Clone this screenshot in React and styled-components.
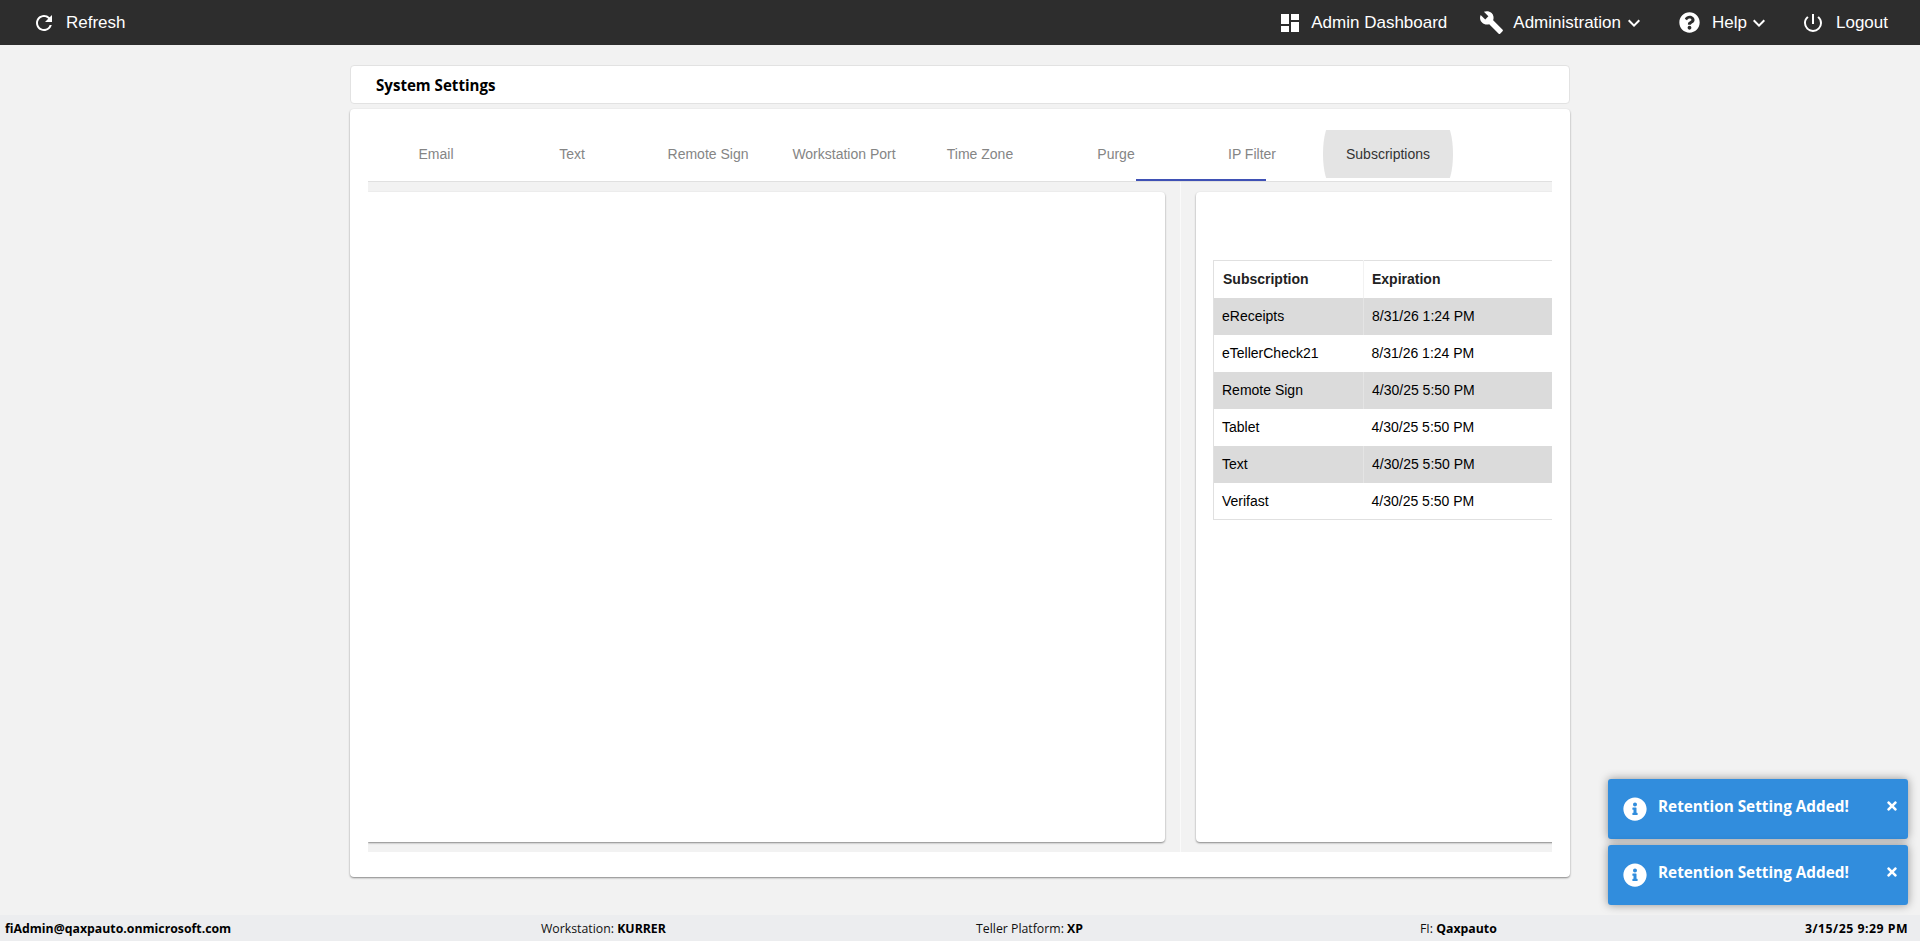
import React from "react";
import styled, { createGlobalStyle } from "styled-components";
import { FaInfoCircle, FaTimes, FaQuestionCircle } from "react-icons/fa";
import { MdDashboard, MdRefresh, MdPowerSettingsNew, MdExpandMore, MdBuild } from "react-icons/md";

const Global = createGlobalStyle`
  html, body { margin: 0; padding: 0; height: 100%; background: #f2f2f2; }
  body { font-family: "Liberation Sans", Arial, sans-serif; overflow: hidden; }
  #root { height: 100%; }
`;

const Page = styled.div`
  display: flex;
  flex-direction: column;
  height: 941px;
  position: relative;
`;

const TopBar = styled.header`
  height: 45px;
  flex: none;
  background: #2d2d2d;
  color: #fff;
  display: flex;
  align-items: center;
  justify-content: space-between;
  padding: 0 32px;
  font-size: 17px;
`;

const NavGroup = styled.nav`
  display: flex;
  align-items: center;
`;

const NavItem = styled.div`
  display: flex;
  align-items: center;
  gap: ${(p) => p.$gap}px;
  margin-left: ${(p) => p.$left || 0}px;
  white-space: nowrap;
`;

const Chevron = styled(MdExpandMore)`
  margin-left: ${(p) => p.$offset}px;
`;

const Main = styled.main`
  flex: 1;
  width: 1220px;
  margin-left: 350px;
  padding-top: 20px;
  display: flex;
  flex-direction: column;
  gap: 5px;
`;

const TitleCard = styled.div`
  height: 39px;
  box-sizing: border-box;
  background: #fff;
  border: 1px solid #e2e2e2;
  border-radius: 4px;
  padding: 1px 0 0 25px;
  display: flex;
  align-items: center;
  font-family: "Open Sans", "Noto Sans", sans-serif;
  font-size: 15.1px;
  font-weight: 700;
  color: #000;
`;

const MainCard = styled.section`
  height: 768px;
  box-sizing: border-box;
  background: #fff;
  border-radius: 4px;
  box-shadow: 0 1px 2px rgba(0, 0, 0, 0.45);
  padding: 21px 18px 25px;
  display: flex;
  flex-direction: column;
`;

const TabStrip = styled.div`
  height: 52px;
  box-sizing: border-box;
  flex: none;
  display: flex;
  border-bottom: 1px solid #e0e0e0;
  position: relative;
`;

const InkBar = styled.div`
  position: absolute;
  left: 768px;
  bottom: 0;
  width: 130px;
  height: 2px;
  background: #3f51b5;
`;

const Tab = styled.div`
  width: 130px;
  margin: 0 3px;
  height: 48px;
  display: flex;
  align-items: center;
  justify-content: center;
  font-size: 14px;
  color: ${(p) => (p.$hover ? "#333" : "#858585")};
  position: relative;
  overflow: hidden;
  z-index: 0;
  flex: none;
  ${(p) =>
    p.$hover &&
    `&::before {
      content: "";
      position: absolute;
      z-index: -1;
      left: 0; right: 0; top: -6px; bottom: -6px;
      background: #e4e4e4;
      border-radius: 8px / 30px;
    }`}
`;

const Well = styled.div`
  flex: 1;
  min-height: 0;
  background: #f2f2f2;
  padding: 10px 0;
  display: flex;
  overflow: hidden;
`;

const LeftPanel = styled.div`
  width: 797px;
  flex: none;
  background: #fff;
  border-radius: 0 4px 4px 0;
  box-shadow: 0 1px 2px rgba(0, 0, 0, 0.45);
`;

const Splitter = styled.div`
  width: 31px;
  flex: none;
  position: relative;
  &::after {
    content: "";
    position: absolute;
    left: 15px;
    top: -10px;
    bottom: -10px;
    width: 1px;
    background: #fafafa;
  }
`;

const RightPanel = styled.div`
  width: 420px;
  flex: none;
  box-sizing: border-box;
  background: #fff;
  border-radius: 4px;
  box-shadow: 0 1px 2px rgba(0, 0, 0, 0.45);
  padding: 68px 0 0 17px;
`;

const Table = styled.table`
  border-collapse: collapse;
  width: 400px;
  table-layout: fixed;
  border-top: 1px solid #e0e0e0;
  border-bottom: 1px solid #e0e0e0;
  border-left: 1px solid #e0e0e0;
  font-size: 14px;
  color: #000;
`;

const FirstColumn = styled.col`
  width: 150px;
`;

const HeadCell = styled.th`
  height: 37px;
  padding: 0 0 0 ${(p) => p.$pad}px;
  box-sizing: border-box;
  text-align: left;
  font-weight: 700;
  font-size: 14px;
  color: #212121;
  border-left: ${(p) => (p.$first ? "0" : "1px solid #f2f2f2")};
`;

const Row = styled.tr`
  background: ${(p) => (p.$odd ? "#dbdbdb" : "#fff")};
`;

const Cell = styled.td`
  height: 37px;
  padding: 0 0 0 ${(p) => p.$pad}px;
  box-sizing: border-box;
  border-left: ${(p) => (p.$odd ? "1px solid #e4e4e4" : "0")};
`;

const StatusBar = styled.footer`
  height: 26px;
  flex: none;
  background: #ecedef;
  margin-top: auto;
  display: grid;
  grid-template-columns: 536px 435px 444px 1fr 1fr;
  align-items: center;
  padding: 0 12px 0 5px;
  font-family: "Open Sans", "Noto Sans", sans-serif;
  font-size: 12.3px;
  color: #111;
  white-space: nowrap;
`;

const Strong = styled.b`
  font-weight: 700;
  color: #000;
`;

const StatusEnd = styled.div`
  text-align: right;
  font-weight: 700;
  letter-spacing: 0.5px;
  color: #000;
`;

const Toasts = styled.div`
  position: absolute;
  right: 12px;
  bottom: 36px;
  width: 300px;
  display: flex;
  flex-direction: column;
  gap: 6px;
`;

const Toast = styled.div`
  height: 60px;
  box-sizing: border-box;
  background: #318ddd;
  color: #fff;
  border-radius: 3px;
  box-shadow: 0 0 10px rgba(0, 0, 0, 0.4);
  display: flex;
  align-items: center;
  padding: 0 9px 0 15px;
  font-family: "Open Sans", "Noto Sans", sans-serif;
  font-weight: 700;
  font-size: 15.3px;
`;

const ToastText = styled.span`
  margin-left: 11px;
  flex: 1;
  margin-top: -6px;
`;

const CloseBtn = styled.span`
  display: flex;
  margin-top: -7px;
`;

const tabs = ["Email", "Text", "Remote Sign", "Workstation Port", "Time Zone", "Purge", "IP Filter", "Subscriptions"];
const rows = [
  ["eReceipts", "8/31/26 1:24 PM"],
  ["eTellerCheck21", "8/31/26 1:24 PM"],
  ["Remote Sign", "4/30/25 5:50 PM"],
  ["Tablet", "4/30/25 5:50 PM"],
  ["Text", "4/30/25 5:50 PM"],
  ["Verifast", "4/30/25 5:50 PM"],
];

export default function App() {
  return (
    <Page>
      <Global />
      <TopBar>
        <NavGroup>
          <NavItem $gap={10}>
            <MdRefresh size={24} />
            Refresh
          </NavItem>
        </NavGroup>
        <NavGroup>
          <NavItem $gap={9}>
            <MdDashboard size={24} />
            Admin Dashboard
          </NavItem>
          <NavItem $gap={9} $left={32}>
            <MdBuild size={25} />
            <span>Administration</span>
            <Chevron size={24} $offset={-8} />
          </NavItem>
          <NavItem $gap={12} $left={33}>
            <FaQuestionCircle size={21} />
            <span>Help</span>
            <Chevron size={24} $offset={-12} />
          </NavItem>
          <NavItem $gap={11} $left={30}>
            <MdPowerSettingsNew size={24} />
            Logout
          </NavItem>
        </NavGroup>
      </TopBar>
      <Main>
        <TitleCard>System Settings</TitleCard>
        <MainCard>
          <TabStrip>
            {tabs.map((t) => (
              <Tab key={t} $hover={t === "Subscriptions"}>
                {t}
              </Tab>
            ))}
            <InkBar />
          </TabStrip>
          <Well>
            <LeftPanel />
            <Splitter />
            <RightPanel>
              <Table>
                <colgroup>
                  <FirstColumn />
                  <col />
                </colgroup>
                <thead>
                  <tr>
                    <HeadCell $first $pad={9}>Subscription</HeadCell>
                    <HeadCell $pad={8}>Expiration</HeadCell>
                  </tr>
                </thead>
                <tbody>
                  {rows.map((r, i) => (
                    <Row key={r[0]} $odd={i % 2 === 0}>
                      <Cell $pad={8}>{r[0]}</Cell>
                      <Cell $pad={8} $odd={i % 2 === 0}>{r[1]}</Cell>
                    </Row>
                  ))}
                </tbody>
              </Table>
            </RightPanel>
          </Well>
        </MainCard>
      </Main>
      <StatusBar>
        <Strong>fiAdmin@qaxpauto.onmicrosoft.com</Strong>
        <div>Workstation: <Strong>KURRER</Strong></div>
        <div>Teller Platform: <Strong>XP</Strong></div>
        <div>FI: <Strong>Qaxpauto</Strong></div>
        <StatusEnd>3/15/25 9:29 PM</StatusEnd>
      </StatusBar>
      <Toasts>
        {[0, 1].map((i) => (
          <Toast key={i}>
            <FaInfoCircle size={24} />
            <ToastText>Retention Setting Added!</ToastText>
            <CloseBtn><FaTimes size={14} /></CloseBtn>
          </Toast>
        ))}
      </Toasts>
    </Page>
  );
}
